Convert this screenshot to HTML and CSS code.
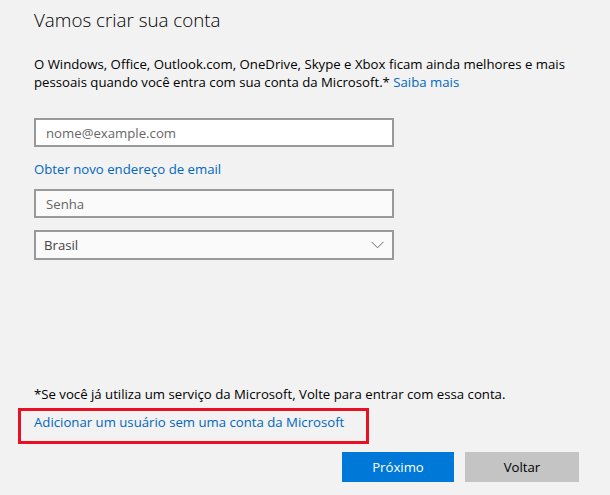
FILE: index.html
```html
<!DOCTYPE html>
<html lang="pt-BR">
<head>
<meta charset="utf-8">
<title>Vamos criar sua conta</title>
<link rel="stylesheet" href="styles.css">
</head>
<body>
<div class="page">
  <main class="content">
    <h1 class="title">Vamos criar sua conta</h1>
    <p class="intro">O Windows, Office, Outlook.com, OneDrive, Skype e Xbox ficam ainda melhores e mais pessoais quando você entra com sua conta da Microsoft.* <a class="link" href="#">Saiba mais</a></p>
    <div class="field field-email"><span class="placeholder">nome@example.com</span></div>
    <a class="link new-email" href="#">Obter novo endereço de email</a>
    <div class="field field-pass"><span class="placeholder">Senha</span></div>
    <div class="field field-select"><span class="select-value">Brasil</span>
      <svg class="chevron" width="13" height="8" viewBox="0 0 13 8"><path d="M0.5 0.8 L6.5 6.8 L12.5 0.8" fill="none" stroke="#666" stroke-width="1"/></svg>
    </div>
  </main>
  <footer class="bottom">
    <p class="note">*Se você já utiliza um serviço da Microsoft, Volte para entrar com essa conta.</p>
    <div class="highlight"><a class="link" href="#">Adicionar um usuário sem uma conta da Microsoft</a></div>
    <div class="buttons">
      <button class="btn btn-primary">Próximo</button>
      <button class="btn btn-secondary">Voltar</button>
    </div>
  </footer>
</div>
</body>
</html>
```
FILE: styles.css
```css
* { box-sizing: border-box; }
html, body { margin: 0; padding: 0; }
body {
  background: #f2f2f2;
  font-family: "Open Sans", "Noto Sans", sans-serif;
  color: #000;
  width: 610px;
  height: 495px;
  overflow: hidden;
}
.page {
  height: 495px;
  display: flex;
  flex-direction: column;
  justify-content: space-between;
  padding: 0 0 13px 34px;
}
.content { display: flex; flex-direction: column; align-items: flex-start; }
.title {
  margin: 6px 0 0;
  font-size: 18.8px;
  font-weight: 300;
  line-height: 28px;
  color: #000;
}
.intro {
  margin: 21px 0 0;
  font-size: 13.2px;
  line-height: 18px;
  width: 545px;
}
.link { color: #0067c0; text-decoration: none; }
.field {
  width: 360px;
  height: 29px;
  border: 2px solid #999;
  background: #fafafa;
  display: flex;
  align-items: center;
  padding: 0 10px;
  font-size: 13.2px;
}
.field-email { margin-top: 27px; background: #fff; }
.placeholder { color: #666; }
.new-email { margin-top: 13px; font-size: 13.2px; line-height: 18px; }
.field-pass { margin-top: 11px; }
.field-select { margin-top: 12px; height: 30px; justify-content: space-between; padding-left: 8px; padding-right: 8px; }
.select-value { color: #444; }
.chevron { display: block; }
.bottom { display: flex; flex-direction: column; align-items: flex-start; }
.note { margin: 0; font-size: 13.2px; line-height: 18px; }
.highlight {
  margin: 5px 0 0 -16px;
  width: 351px;
  height: 36px;
  border: 3px solid #e81123;
  padding: 2px 0 0 13px;
  font-size: 13.2px;
  line-height: 18px;
}
.buttons { display: flex; gap: 11px; margin-top: 8px; align-self: flex-start; margin-left: 308px; }
.btn {
  width: 112px;
  height: 30px;
  border: none;
  font-family: inherit;
  font-size: 13.2px;
  padding: 0;
}
.btn-primary { background: #0078d7; color: #fff; }
.btn-secondary { background: #c4c4c4; color: #000; width: 114px; }
```
